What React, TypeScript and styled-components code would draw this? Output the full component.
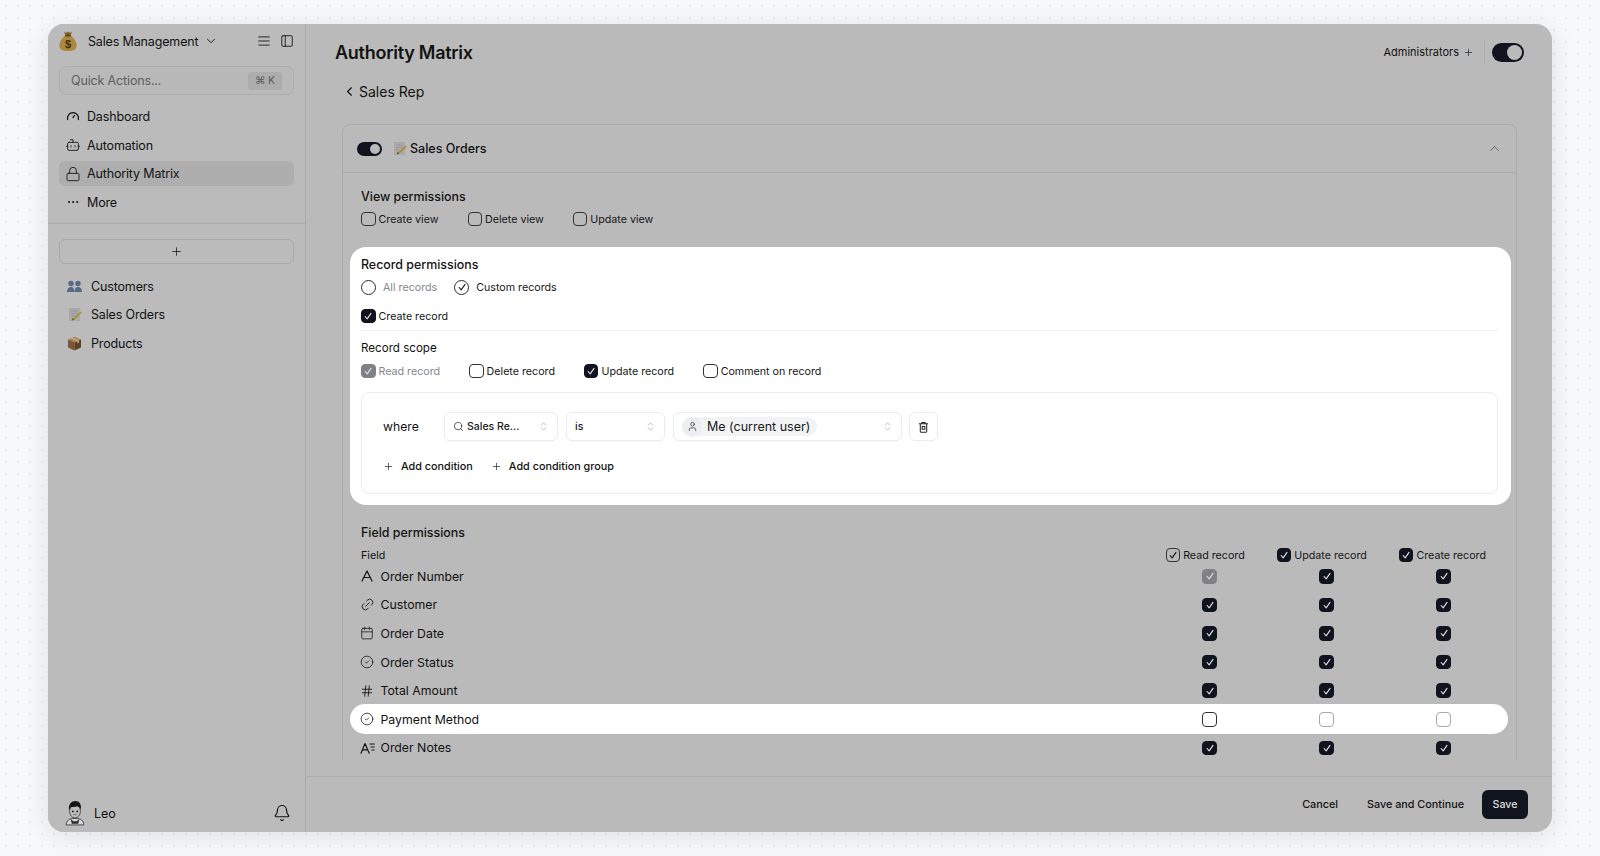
import React from "react";
import styled, { createGlobalStyle } from "styled-components";
import {
  AlignJustify, Bell, Bot, Calendar, ChevronDown, ChevronLeft, ChevronUp, ChevronsUpDown,
  CircleCheck, Ellipsis, Hash, Link2, Lock, PanelLeft, Plus, Search, User,
} from "lucide-react";

const Global = createGlobalStyle`
  html, body { margin: 0; height: 100%; }
  body {
    font-family: Inter, "Liberation Sans", sans-serif;
    background-color: #f7f8f9;
    background-image: radial-gradient(circle, #e9eaec 0.9px, transparent 1.1px);
    background-size: 12px 12px;
    background-position: 0 0;
    color: #121212;
    -webkit-font-smoothing: antialiased;
  }
  * { box-sizing: border-box; }
`;

const Page = styled.div`
  width: 1600px;
  height: 856px;
  padding: 24px 48px;
  overflow: hidden;
`;
const Win = styled.div`
  width: 1504px;
  height: 808px;
  display: flex;
  background: #bababa;
  border-radius: 16px;
  overflow: hidden;
  box-shadow: 0 4px 24px rgba(20, 24, 40, 0.1);
`;

/* Sidebar */
const Side = styled.aside`
  width: 258px;
  flex: none;
  display: flex;
  flex-direction: column;
  border-right: 1px solid #a9a9a9;
  background: #bbbbbb;
`;
const SideTop = styled.div`
  padding: 6px 11px 0 10px;
  border-bottom: 1px solid #acacac;
  height: 200px;
  flex: none;
`;
const Workspace = styled.div`
  display: flex;
  align-items: center;
  height: 22px;
  margin-bottom: 14px;
  font-size: 12.5px;
  letter-spacing: -0.15px;
`;
const WorkspaceName = styled.span`
  margin-left: 10px;
  margin-right: 6px;
`;
const HeadTools = styled.div`
  margin-left: auto;
  display: flex;
  gap: 9px;
`;
const Quick = styled.div`
  display: flex;
  align-items: center;
  justify-content: space-between;
  height: 29px;
  margin-left: 1px;
  padding: 0 11px;
  border: 1px solid #aeaeae;
  border-radius: 7px;
  background: #b9b9b9;
  font-size: 12.5px;
  letter-spacing: -0.15px;
  color: #5e5e5e;
`;
const Kbd = styled.span`
  display: flex;
  align-items: center;
  justify-content: center;
  width: 34px;
  height: 18px;
  border-radius: 3px;
  background: #adadad;
  font-size: 10.5px;
  color: #5b5b5b;
`;
const NavList = styled.nav`
  margin-top: 7px;
  display: flex;
  flex-direction: column;
`;
const NavRow = styled.div<{ $active?: boolean }>`
  display: flex;
  align-items: center;
  gap: 7px;
  height: 28.7px;
  margin-left: 1px;
  padding-left: 7px;
  font-size: 12.5px;
  letter-spacing: -0.15px;
  position: relative;
  z-index: 0;
  &::before {
    content: "";
    display: ${(p) => (p.$active ? "block" : "none")};
    position: absolute;
    inset: 2px 0;
    background: #aeaeae;
    border-radius: 6px;
    z-index: -1;
  }
`;
const NavIcon = styled.span`
  width: 14px;
  height: 14px;
  display: flex;
  align-items: center;
  justify-content: center;
  flex: none;
  svg { flex: none; }
`;
const SideBody = styled.div`
  flex: 1;
  padding: 15px 11px 0 11px;
  display: flex;
  flex-direction: column;
`;
const AddBtn = styled.div`
  height: 25px;
  border: 1px solid #a9a9a9;
  border-radius: 6px;
  display: flex;
  align-items: center;
  justify-content: center;
  margin-bottom: 8px;
`;
const TableRow = styled.div`
  display: flex;
  align-items: center;
  gap: 8px;
  height: 28.6px;
  padding-left: 8px;
  font-size: 12.5px;
  letter-spacing: -0.15px;
`;
const TableEmoji = styled.span`
  width: 15px;
  display: flex;
  justify-content: center;
  margin-right: 1px;
`;
const SideFoot = styled.div`
  display: flex;
  align-items: center;
  padding: 0 14px 0 16px;
  height: 38px;
  font-size: 12.5px;
  gap: 8px;
`;
const FootBell = styled.span`
  margin-left: auto;
  display: flex;
`;

/* Main */
const Main = styled.main`
  flex: 1;
  min-width: 0;
  display: flex;
  flex-direction: column;
`;
const TopBar = styled.header`
  height: 56px;
  flex: none;
  display: flex;
  align-items: center;
  padding: 0 28px 0 29px;
`;
const Title = styled.h1`
  margin: 0;
  font-size: 18px;
  font-weight: 600;
  letter-spacing: -0.26px;
`;
const TopRight = styled.div`
  margin-left: auto;
  display: flex;
  align-items: center;
  font-size: 11px;
  gap: 4px;
`;
const Sep = styled.span`
  width: 1px;
  height: 24px;
  background: #adadad;
  margin: 0 3px 0 6px;
`;
const Toggle = styled.span<{ $w: number; $h: number }>`
  width: ${(p) => p.$w}px;
  height: ${(p) => p.$h}px;
  border-radius: ${(p) => p.$h}px;
  background: #10141f;
  display: inline-flex;
  align-items: center;
  justify-content: flex-end;
  padding: 2px;
  flex: none;
`;
const Thumb = styled.span`
  height: 100%;
  aspect-ratio: 1;
  border-radius: 50%;
  background: #bababa;
`;
const Back = styled.div`
  display: flex;
  align-items: center;
  height: 22px;
  padding-left: 36px;
  font-size: 14px;
  gap: 2px;
  flex: none;
`;
const Scroll = styled.div`
  flex: none;
  height: 658px;
  padding: 22px 35px 0 36px;
  overflow: hidden;
`;
const Card = styled.section`
  border: 1px solid #ababab;
  border-radius: 8px 8px 0 0;
`;
const CardHead = styled.div`
  display: flex;
  align-items: center;
  height: 48px;
  padding: 0 14px 0 14px;
  border-bottom: 1px solid #ababab;
  font-size: 12.5px;
  font-weight: 500;
  gap: 11px;
`;
const HeadName = styled.span`
  display: flex;
  align-items: center;
  gap: 3px;
`;
const HeadChevron = styled.span`
  margin-left: auto;
  display: flex;
  color: #555;
`;
const CardBody = styled.div`
  padding: 13px 5px 0 7px;
`;
const Indented = styled.div`
  padding-left: 11px;
`;
const Label = styled.div<{ $top?: number }>`
  height: 20px;
  display: flex;
  align-items: center;
  font-size: 12.4px;
  font-weight: 500;
  margin-top: ${(p) => p.$top ?? 0}px;
`;
const SubLabel = styled(Label)`
  font-weight: 400;
  font-size: 11.6px;
`;
const Checks = styled.div<{ $top?: number; $gap?: number }>`
  display: flex;
  align-items: center;
  height: 20px;
  margin-top: ${(p) => p.$top ?? 3}px;
  gap: ${(p) => p.$gap ?? 29}px;
`;
const CheckLabel = styled.span<{ $muted?: boolean; $gap?: number }>`
  display: inline-flex;
  align-items: center;
  gap: ${(p) => p.$gap ?? 3}px;
  font-size: 10.7px;
  color: ${(p) => (p.$muted ? "#85878c" : "#161616")};
  white-space: nowrap;
`;
type Kind = "on" | "off" | "offLight" | "disabled" | "outline";
const Box = styled.span<{ $kind: Kind }>`
  width: 14.5px;
  height: 14.5px;
  flex: none;
  display: inline-flex;
  align-items: center;
  justify-content: center;
  border-radius: 4px;
  border: 1px solid
    ${(p) =>
      p.$kind === "on" ? "#10141f" :
      p.$kind === "disabled" ? "#808186" :
      p.$kind === "offLight" ? "#a8a8a8" : "#333"};
  background: ${(p) =>
    p.$kind === "on" ? "#10141f" : p.$kind === "disabled" ? "#808186" : "transparent"};
  color: ${(p) => (p.$kind === "outline" ? "#111" : "#e4e4e4")};
`;
const Radio = styled.span`
  width: 15px;
  height: 15px;
  border-radius: 50%;
  border: 1px solid #2b2b2b;
  flex: none;
  display: inline-flex;
  align-items: center;
  justify-content: center;
`;
const Panel = styled.div`
  background: #fff;
  border-radius: 16px;
  margin-top: 18px;
  padding: 7px 13px 11px 11px;
  height: 258px;
`;
const Divider = styled.div`
  height: 1px;
  background: #eceef0;
  margin-top: 4px;
`;
const Conditions = styled.div`
  margin-top: 11px;
  height: 102px;
  border: 1px solid #eaecef;
  border-radius: 8px;
  padding: 19px 0 0 21px;
`;
const CondRow = styled.div`
  display: flex;
  align-items: center;
  gap: 8px;
`;
const Where = styled.span`
  width: 53px;
  font-size: 12.2px;
`;
const Select = styled.div<{ $w: number }>`
  width: ${(p) => p.$w}px;
  height: 29px;
  border: 1px solid #eaecef;
  border-radius: 6px;
  display: flex;
  align-items: center;
  padding: 0 8px;
  gap: 3px;
  font-size: 10.5px;
  font-weight: 500;
  color: #1a1a1a;
  box-shadow: 0 1px 2px rgba(0, 0, 0, 0.03);
`;
const UpDown = styled.span`
  margin-left: auto;
  display: flex;
  color: #8b8f96;
`;
const Chip = styled.span`
  display: flex;
  align-items: center;
  gap: 5px;
  height: 19px;
  padding-right: 7px;
  border-radius: 9.5px;
  background: #f1f3f5;
  font-size: 12.5px;
  font-weight: 400;
`;
const ChipIcon = styled.span`
  width: 20px;
  height: 20px;
  border-radius: 50%;
  background: #eceef1;
  display: flex;
  align-items: center;
  justify-content: center;
`;
const IconBtn = styled.div`
  width: 29px;
  height: 29px;
  border: 1px solid #eaecef;
  border-radius: 6px;
  display: flex;
  align-items: center;
  justify-content: center;
  margin-left: -1px;
`;
const AddRow = styled.div`
  display: flex;
  align-items: center;
  height: 20px;
  margin-top: 15px;
  gap: 18px;
`;
const AddLink = styled.span`
  display: inline-flex;
  align-items: center;
  gap: 7px;
  font-size: 10.8px;
  font-weight: 500;
`;
const FieldHead = styled.div`
  display: flex;
  align-items: center;
  height: 20px;
  margin-top: 3px;
  margin-bottom: -3px;
  font-size: 10.7px;
  padding-right: 25px;
`;
const FieldHeadChecks = styled.div`
  margin-left: auto;
  display: flex;
  gap: 32px;
`;
const FieldRow = styled.div<{ $hl?: boolean }>`
  display: flex;
  align-items: center;
  height: ${(p) => (p.$hl ? 30 : 28.6)}px;
  margin: ${(p) => (p.$hl ? "-0.7px 3px -0.7px 0" : "0 3px 0 0")};
  padding-left: 9.5px;
  background: ${(p) => (p.$hl ? "#fff" : "transparent")};
  border-radius: 15px;
  font-size: 12.3px;
`;
const FieldIcon = styled.span`
  width: 15px;
  height: 15px;
  flex: none;
  display: flex;
  align-items: center;
  justify-content: center;
  margin-right: 6px;
`;
const FieldName = styled.span`
  flex: 1;
`;
const Cell = styled.span`
  width: 117px;
  display: flex;
  justify-content: center;
  &:last-child { margin-right: 6px; }
`;
const Footer = styled.footer`
  flex: none;
  margin-top: 16px;
  height: 56px;
  border-top: 1px solid #acacac;
  display: flex;
  align-items: center;
  justify-content: flex-end;
  padding: 0 24px 0 0;
  gap: 29px;
  font-size: 10.8px;
  font-weight: 500;
`;
const SaveBtn = styled.button`
  width: 46px;
  height: 29px;
  border: 0;
  border-radius: 6px;
  background: #10141f;
  color: #dfdfdf;
  font: inherit;
  font-size: 10.7px;
  margin-left: -11px;
`;

const Tick = ({ size = 10 }: { size?: number }) => (
  <svg width={size} height={size} viewBox="0 0 12 12" fill="none" stroke="currentColor" strokeWidth="1.3" strokeLinecap="round" strokeLinejoin="round">
    <path d="M2.6 6.6 5 9.4 9.6 2.8" />
  </svg>
);
const Check = ({ kind }: { kind: Kind }) => (
  <Box $kind={kind}>{kind === "off" || kind === "offLight" ? null : <Tick />}</Box>
);
const CheckItem = ({ kind, text, muted }: { kind: Kind; text: string; muted?: boolean }) => (
  <CheckLabel $muted={muted}>
    <Check kind={kind} />
    {text}
  </CheckLabel>
);

const Gauge = () => (
  <svg width="14" height="14" viewBox="0 0 14 14" fill="none" stroke="currentColor" strokeWidth="1.2" strokeLinecap="round">
    <path d="M1.6 10.6A5.6 5.6 0 0 1 7 3.6a5.6 5.6 0 0 1 5.4 7" />
    <path d="M7 8.6 8.4 6.4" />
  </svg>
);
const MoneyBag = () => (
  <svg width="20" height="24" viewBox="0 0 20 22">
    <path d="M6 1.5 8 3l2-1.4L12 3l2-1.4-1.6 4.4H7.6z" fill="#7d5d22" />
    <path d="M7.4 5.6h5.2C16 8 18.6 12 18.6 15.4c0 3.8-3 5.6-8.6 5.6s-8.6-1.8-8.6-5.6C1.4 12 4 8 7.4 5.6z" fill="#ac873c" />
    <rect x="7" y="5" width="6" height="1.5" rx=".7" fill="#5c4418" />
    <text x="10" y="18" textAnchor="middle" fontSize="11" fontWeight="700" fontFamily="Liberation Sans, sans-serif" fill="#3f3110">$</text>
  </svg>
);
const Memo = () => (
  <svg width="14" height="15" viewBox="0 0 14 15">
    <rect x="1" y="1" width="11" height="13" fill="#a9a9aa" />
    <path d="M3 4h7M3 6.5h7M3 9h4" stroke="#939394" strokeWidth=".7" />
    <path d="M12.5 4.4 5.4 11l-1.7 2.6 2.9-1.2 7.1-6.7z" fill="#ad8e33" />
    <path d="M3.7 13.6 4.5 11l1.9 1.4z" fill="#6d5a2a" />
  </svg>
);
const Busts = () => (
  <svg width="15" height="13" viewBox="0 0 15 13" fill="#566a85">
    <circle cx="4" cy="3.5" r="2.7" />
    <path d="M0 12c0-3 1.4-5 4-5s3.4 2 3.4 5z" />
    <circle cx="11" cy="3.5" r="2.7" />
    <path d="M7.6 12c0-3 .8-5 3.4-5s4 2 4 5z" />
  </svg>
);
const Pack = () => (
  <svg width="15" height="15" viewBox="0 0 15 15">
    <path d="M7.5.8 14 3.6 7.5 6.6 1 3.6z" fill="#a78058" />
    <path d="M1 3.6l6.5 3v7.8L1 11.4z" fill="#7b5635" />
    <path d="M14 3.6l-6.5 3v7.8l6.5-3z" fill="#5d3f26" />
    <path d="M4 2.2l6.4 3v2.3l1.5-.7V4.5L5.6 1.6z" fill="#c4b08c" />
  </svg>
);
const Avatar = () => (
  <svg width="22" height="26" viewBox="0 0 20 24">
    <path d="M2 23c0-4 2.4-6 8-6s8 2 8 6z" fill="#d8d8d8" stroke="#222" strokeWidth=".7" />
    <path d="M6 17.5 7 22h6l1-4.500-2.500 2h-3z" fill="#2a2a2a" />
    <ellipse cx="10" cy="10.500" rx="5" ry="6" fill="#bcbcbc" stroke="#222" strokeWidth=".6" />
    <path d="M4.500 9.500C3.500 4 7 1 10.500 1c3.500 0 5.500 3 5 8-1-2-2-3-3.500-3.200-2 .7-5 .6-6 1z" fill="#151515" />
    <circle cx="8" cy="10.500" r=".8" fill="#111" />
    <circle cx="12" cy="10.500" r=".8" fill="#111" />
    <path d="M8.800 13.500h2.400" stroke="#333" strokeWidth=".6" />
  </svg>
);
const TextA = () => (
  <svg width="14" height="14" viewBox="0 0 14 14" fill="none" stroke="currentColor" strokeWidth="1.2" strokeLinecap="round" strokeLinejoin="round">
    <path d="M2 12 7 2l5 10M3.900 8.500h6.200" />
  </svg>
);
const TextNotes = () => (
  <svg width="15" height="14" viewBox="0 0 15 14" fill="none" stroke="currentColor" strokeWidth="1.150" strokeLinecap="round" strokeLinejoin="round">
    <path d="M1 12.200 5 2.500l4.200 9.700M2.400 8.800h5.400M10 3h4.200M11 6h3.200M11.800 9h2.400" />
  </svg>
);
const TrashIcon = () => (
  <svg width="11" height="12" viewBox="0 0 12 13" fill="none" stroke="#222" strokeWidth="1.100" strokeLinecap="round" strokeLinejoin="round">
    <path d="M1.500 3h9M4.200 3V1.600h3.600V3M2.500 3v8.400c0 .4.300.7.700.7h5.600c.4 0 .7-.3.700-.7V3" />
    <path d="M4.500 6h3v3h-3z" />
  </svg>
);

const fields: { name: string; icon: React.ReactNode; kinds: [Kind, Kind, Kind]; hl?: boolean }[] = [
  { name: "Order Number", icon: <TextA />, kinds: ["disabled", "on", "on"] },
  { name: "Customer", icon: <Link2 size={15} strokeWidth={1.3} style={{ transform: "rotate(-45deg)" }} />, kinds: ["on", "on", "on"] },
  { name: "Order Date", icon: <Calendar size={14} strokeWidth={1.3} />, kinds: ["on", "on", "on"] },
  { name: "Order Status", icon: <CircleCheck size={14} strokeWidth={1.3} />, kinds: ["on", "on", "on"] },
  { name: "Total Amount", icon: <Hash size={14} strokeWidth={1.5} />, kinds: ["on", "on", "on"] },
  { name: "Payment Method", icon: <CircleCheck size={14} strokeWidth={1.3} />, kinds: ["off", "offLight", "offLight"], hl: true },
  { name: "Order Notes", icon: <TextNotes />, kinds: ["on", "on", "on"] },
];

export default function App() {
  return (
    <Page>
      <Global />
      <Win>
        <Side>
          <SideTop>
            <Workspace>
              <MoneyBag />
              <WorkspaceName>Sales Management</WorkspaceName>
              <ChevronDown size={14} strokeWidth={1.6} />
              <HeadTools>
                <AlignJustify size={14} strokeWidth={1.5} />
                <PanelLeft size={14} strokeWidth={1.5} />
              </HeadTools>
            </Workspace>
            <Quick>
              Quick Actions...
              <Kbd>⌘ K</Kbd>
            </Quick>
            <NavList>
              <NavRow><NavIcon><Gauge /></NavIcon>Dashboard</NavRow>
              <NavRow><NavIcon><Bot size={16} strokeWidth={1.3} /></NavIcon>Automation</NavRow>
              <NavRow $active><NavIcon><Lock size={16} strokeWidth={1.3} /></NavIcon>Authority Matrix</NavRow>
              <NavRow><NavIcon><Ellipsis size={14} strokeWidth={1.7} /></NavIcon>More</NavRow>
            </NavList>
          </SideTop>
          <SideBody>
            <AddBtn><Plus size={13} strokeWidth={1.4} /></AddBtn>
            <TableRow><TableEmoji><Busts /></TableEmoji>Customers</TableRow>
            <TableRow><TableEmoji><Memo /></TableEmoji>Sales Orders</TableRow>
            <TableRow><TableEmoji><Pack /></TableEmoji>Products</TableRow>
          </SideBody>
          <SideFoot>
            <Avatar />
            Leo
            <FootBell><Bell size={18} strokeWidth={1.6} /></FootBell>
          </SideFoot>
        </Side>
        <Main>
          <TopBar>
            <Title>Authority Matrix</Title>
            <TopRight>
              Administrators
              <Plus size={11} strokeWidth={1.4} />
              <Sep />
              <Toggle $w={32} $h={19}><Thumb /></Toggle>
            </TopRight>
          </TopBar>
          <Back><ChevronLeft size={15} strokeWidth={1.8} />Sales Rep</Back>
          <Scroll>
            <Card>
              <CardHead>
                <Toggle $w={25} $h={14}><Thumb /></Toggle>
                <HeadName><Memo />Sales Orders</HeadName>
                <HeadChevron><ChevronUp size={15} strokeWidth={1.3} /></HeadChevron>
              </CardHead>
              <CardBody>
                <Indented>
                  <Label>View permissions</Label>
                  <Checks>
                    <CheckItem kind="off" text="Create view" />
                    <CheckItem kind="off" text="Delete view" />
                    <CheckItem kind="off" text="Update view" />
                  </Checks>
                </Indented>
                <Panel>
                  <Label>Record permissions</Label>
                  <Checks $gap={17} $top={3}>
                    <CheckLabel $muted $gap={7}><Radio />All records</CheckLabel>
                    <CheckLabel $gap={7}><Radio><Tick /></Radio>Custom records</CheckLabel>
                  </Checks>
                  <Checks $top={9}><CheckItem kind="on" text="Create record" /></Checks>
                  <Divider />
                  <SubLabel $top={7}>Record scope</SubLabel>
                  <Checks $gap={29} $top={3}>
                    <CheckItem kind="disabled" text="Read record" muted />
                    <CheckItem kind="off" text="Delete record" />
                    <CheckItem kind="on" text="Update record" />
                    <CheckItem kind="off" text="Comment on record" />
                  </Checks>
                  <Conditions>
                    <CondRow>
                      <Where>where</Where>
                      <Select $w={114}><Search size={11} strokeWidth={1.5} />Sales Re...<UpDown><ChevronsUpDown size={11} strokeWidth={1.3} /></UpDown></Select>
                      <Select $w={99}>is<UpDown><ChevronsUpDown size={11} strokeWidth={1.3} /></UpDown></Select>
                      <Select $w={229}>
                        <Chip><ChipIcon><User size={11} strokeWidth={1.4} /></ChipIcon>Me (current user)</Chip>
                        <UpDown><ChevronsUpDown size={11} strokeWidth={1.3} /></UpDown>
                      </Select>
                      <IconBtn><TrashIcon /></IconBtn>
                    </CondRow>
                    <AddRow>
                      <AddLink><Plus size={11} strokeWidth={1.4} />Add condition</AddLink>
                      <AddLink><Plus size={11} strokeWidth={1.4} />Add condition group</AddLink>
                    </AddRow>
                  </Conditions>
                </Panel>
                <Indented>
                  <Label $top={17}>Field permissions</Label>
                  <FieldHead>
                    Field
                    <FieldHeadChecks>
                      <CheckItem kind="outline" text="Read record" />
                      <CheckItem kind="on" text="Update record" />
                      <CheckItem kind="on" text="Create record" />
                    </FieldHeadChecks>
                  </FieldHead>
                </Indented>
                {fields.map((f) => (
                  <FieldRow key={f.name} $hl={f.hl}>
                    <FieldIcon>{f.icon}</FieldIcon>
                    <FieldName>{f.name}</FieldName>
                    {f.kinds.map((k, i) => (
                      <Cell key={i}><Check kind={k} /></Cell>
                    ))}
                  </FieldRow>
                ))}
              </CardBody>
            </Card>
          </Scroll>
          <Footer>
            <span>Cancel</span>
            <span>Save and Continue</span>
            <SaveBtn>Save</SaveBtn>
          </Footer>
        </Main>
      </Win>
    </Page>
  );
}
